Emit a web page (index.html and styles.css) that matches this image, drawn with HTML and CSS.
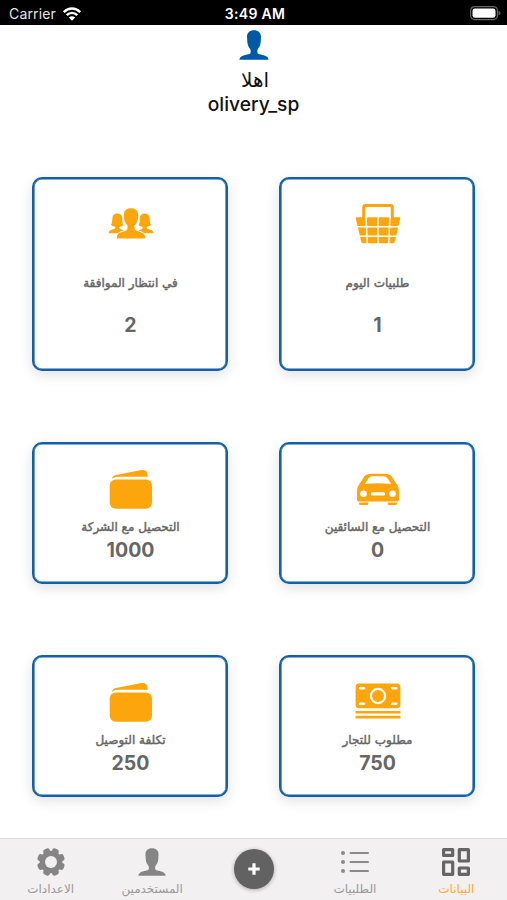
FILE: index.html
```html
<!DOCTYPE html>
<html lang="ar">
<head>
<meta charset="utf-8">
<title>olivery</title>
<link rel="stylesheet" href="styles.css">
</head>
<body>
<svg class="defs" aria-hidden="true">
  <symbol id="person" viewBox="0 0 30 30">
    <path d="M15 .2C10.800.2 8 2.700 8 6.500L8.300 12C8.600 15 9.600 17.200 11 18.700C12.100 20.300 11.700 22.600 11.200 23.400C9.500 24.600 4 25 2 26.700C.9 27.600.5 28.500.4 29.800H29.600C29.500 28.500 29.100 27.600 28 26.700C26 25 20.500 24.600 18.800 23.400C18.300 22.600 17.900 20.300 19 18.700C20.400 17.200 21.400 15 21.700 12L22 6.500C22 2.700 19.200.2 15 .2Z"/>
  </symbol>
  <symbol id="wallet" viewBox="0 0 46 46">
    <path d="M4 12.800C4.200 11 5.800 9.400 8 9L33.500 4.100C37 3.500 39.500 5.500 39.500 8.500V11.300C39 11 38 10.800 36 10.800H11C7.500 10.800 5.800 11.500 4 12.800Z"/>
    <rect x="1.700" y="13.600" width="42.300" height="29.200" rx="6"/>
  </symbol>
</svg>
<div class="app">
  <header class="status">
    <span class="carrier">Carrier
      <svg width="20" height="16" viewBox="0 0 20 16" fill="none" stroke="#fff" stroke-width="2.500"><path d="M1.800 6.100C6.600 1.400 13.400 1.400 18.200 6.100M4.700 9.200C7.800 6.200 12.200 6.200 15.300 9.200"/><path d="M10 14.800L6.900 11.500C8.600 9.900 11.400 9.900 13.100 11.500Z" fill="#fff" stroke="none"/></svg>
    </span>
    <span class="time">3:49 AM</span>
    <span class="battery"><svg width="31" height="15" viewBox="0 0 31 15"><rect x=".6" y=".6" width="26.800" height="13" rx="4" fill="none" stroke="#666" stroke-width="1.200"/><rect x="2.500" y="2.400" width="23" height="9.400" rx="2.300" fill="#fff"/><path d="M28.600 4.800Q30.500 5.500 30.500 7.100T28.600 9.400Z" fill="#666"/></svg></span>
  </header>

  <main>
    <section class="profile">
      <svg class="avatar" width="30" height="30"><use href="#person"/></svg>
      <p class="hello" dir="rtl">اهلا</p>
      <p class="name">olivery_sp</p>
    </section>

    <section class="cards" dir="rtl">
      <article class="card tall">
        <svg width="46" height="46" viewBox="0 0 46 46">
          <path d="M1.500 16.300H44.500Q45.500 16.300 45.300 17.300L39.700 41Q39.400 42.300 38 42.300H8Q6.600 42.300 6.300 41L.7 17.300Q.5 16.300 1.500 16.300Z"/>
          <path d="M8.700 17V6.300Q8.700 4.500 10.500 4.500H35.500Q37.300 4.500 37.300 6.300V17" fill="#fff" stroke="#fda50d" stroke-width="3"/>
          <path d="M12.300 16.300H33.700V24H12.300Z"/>
          <path d="M0 25.700H46M0 35.300H46M23 16V43M11 15L12.300 43M35 15L33.700 43" stroke="#fff" stroke-width="1.500" fill="none"/>
        </svg>
        <h2>طلبيات اليوم</h2>
        <strong>1</strong>
      </article>
      <article class="card tall">
        <svg width="46" height="46" viewBox="0 0 46 46">
          <path id="member" d="M9.300 12.500C6.300 12.500 4.600 14.200 4.400 17C4.200 20 4 22.500 3 24C4 25.300 6 25.600 7.200 25.800V27.200C6 28.300 3 28.500 1.700 29.700C.9 30.500.7 31.200.7 32.300H10C12 30.500 14 30.300 15.800 29.400C14 28.700 12 28 11.400 27.200V25.800C13 25.600 14.500 25.200 15.300 24C14.400 22.500 14.300 20 14.200 17C14 14.200 12.300 12.500 9.300 12.500Z"/>
          <use href="#member" transform="translate(46 0) scale(-1 1)"/>
          <path d="M23 7.200C18.500 7.200 15.800 9.700 15.800 14C15.800 19.200 17 22 19.300 24.200C19.800 26 19.600 28 18.800 28.900C16.800 30.400 12.500 30.700 10.500 32.500C9.200 33.700 8.900 35.500 8.900 37.600H37.100C37.100 35.500 36.800 33.700 35.500 32.500C33.500 30.700 29.200 30.400 27.200 28.900C26.400 28 26.200 26 26.700 24.200C29 22 30.200 19.200 30.200 14C30.200 9.700 27.500 7.200 23 7.200Z" stroke="#fff" stroke-width="1.400" paint-order="stroke"/>
        </svg>
        <h2>في انتظار الموافقة</h2>
        <strong>2</strong>
      </article>

      <article class="card">
        <svg width="46" height="46" viewBox="0 -.7 46 46">
          <path d="M16 7H30C33 7 35.200 7.800 36.700 9.700L41.500 17.200C43.200 19.200 44 21.500 44 25V33Q44 34.800 42.300 34.800H3.700Q2 34.800 2 33V25C2 21.500 2.800 19.200 4.500 17.200L9.300 9.700C10.800 7.800 13 7 16 7ZM4 35.900H13.300V37Q13.300 38.200 12 38.200H5.500Q4 38.200 4 37ZM32.700 35.900H42V37Q42 38.200 40.500 38.200H34Q32.700 38.200 32.700 37Z"/>
          <path d="M9.800 17.300L13.500 11.500Q14.800 9.500 17.300 9.500H28.700Q31.200 9.500 32.500 11.500L36.200 17.300Q23 15.600 9.800 17.300Z" fill="#fff"/>
          <circle cx="8.500" cy="27" r="3.300" fill="#fff"/><circle cx="37.500" cy="27" r="3.300" fill="#fff"/>
          <rect x="15.800" y="25.500" width="14.400" height="3.300" rx="1.600" fill="#fff"/>
        </svg>
        <h2>التحصيل مع السائقين</h2>
        <strong>0</strong>
      </article>
      <article class="card">
        <svg width="46" height="46"><use href="#wallet"/></svg>
        <h2>التحصيل مع الشركة</h2>
        <strong>1000</strong>
      </article>

      <article class="card">
        <svg width="46" height="46" viewBox="0 0 46 46">
          <rect x=".6" y="4.500" width="44.800" height="24.700" rx="3.500"/>
          <path d="M.6 32H45.400V34.500H.6ZM.6 36.800H45.400V39.500H.6Z"/>
          <circle cx="23" cy="17" r="7.100" fill="none" stroke="#fff" stroke-width="2.200"/>
          <path d="M5 9.200H9M37.200 9.200H41.200M5 24.700H9M37.200 24.700H41.200" stroke="#fff" stroke-width="2.600" stroke-linecap="round"/>
        </svg>
        <h2>مطلوب للتجار</h2>
        <strong>750</strong>
      </article>
      <article class="card">
        <svg width="46" height="46"><use href="#wallet"/></svg>
        <h2>تكلفة التوصيل</h2>
        <strong>250</strong>
      </article>
    </section>
  </main>

  <nav class="tabs" dir="rtl">
    <a class="tab active">
      <svg width="30" height="30" viewBox="0 0 30 30" fill="none" stroke="#656565" stroke-width="3.200" stroke-linejoin="round"><path d="M2.600 2.600H11.700V8.400H2.600ZM18.300 2.600H27.400V14H18.300ZM2.600 15H11.700V27.300H2.600ZM18.300 21H27.400V27.300H18.300Z"/></svg>
      <span>البيانات</span>
    </a>
    <a class="tab">
      <svg width="30" height="30" viewBox="0 0 30 30" fill="none" stroke="#8a8a8a" stroke-linecap="round"><path d="M10.500 6H28M10.500 15H28M10.500 24H28" stroke-width="2"/><path d="M3 6H3.010M3 15H3.010M3 24H3.010" stroke-width="4"/></svg>
      <span>الطلبيات</span>
    </a>
    <a class="tab add"><svg width="40" height="40" viewBox="0 0 40 40"><path d="M20 14.300V25.700M14.300 20H25.700" stroke="#fff" stroke-width="3.200"/></svg></a>
    <a class="tab">
      <svg width="28" height="30"><use href="#person"/></svg>
      <span>المستخدمين</span>
    </a>
    <a class="tab">
      <svg width="30" height="30" viewBox="-15 -15 30 30">
        <g id="teeth"><rect x="-3.400" y="-14" width="6.800" height="28" rx="2.200" transform="rotate(22.500)"/><rect x="-3.400" y="-14" width="6.800" height="28" rx="2.200" transform="rotate(67.500)"/></g>
        <use href="#teeth" transform="rotate(90)"/>
        <circle r="11.300"/><circle r="6" fill="#f2f0f1"/>
      </svg>
      <span>الاعدادات</span>
    </a>
  </nav>
</div>
</body>
</html>
```

FILE: styles.css
```css
* { box-sizing: border-box; }
body { margin: 0; background: #fff; font-family: Inter, "DejaVu Sans", sans-serif; }
.defs { position: absolute; width: 0; height: 0; }
.app { height: 900px; display: flex; flex-direction: column; overflow: hidden; }
p, h2 { margin: 0; }
svg { display: block; flex: none; }

.status {
  height: 25px; flex: none; padding: 2px 6px 0 9px;
  display: grid; grid-template-columns: 1fr auto 1fr; align-items: center;
  background: #000; color: #fff; font-size: 14px;
}
.carrier { display: flex; align-items: center; gap: 6px; color: #e4e4e4; letter-spacing: .15px; }
.time { font-weight: 600; font-size: 14px; letter-spacing: .3px; }
.battery { justify-self: end; }

main { flex: 1; }
.profile { height: 152px; padding-top: 5px; display: flex; flex-direction: column; align-items: center; color: #111; }
.avatar { fill: #0059a5; }
.hello { margin-top: 8px; font-size: 20px; line-height: 24px; padding-left: 3px; }
.name { font-size: 19.200px; line-height: 24px; font-weight: 500; }

.cards {
  display: grid; grid-template-columns: 196px 196px; grid-template-rows: 194px 142px 142px;
  column-gap: 51px; row-gap: 71px; padding: 0 32px; justify-content: start;
}
.card {
  display: flex; flex-direction: column; align-items: center;
  padding: 22px 0 0 1px; border: 2px solid #1260a8; border-radius: 10px;
  background: #fff; color: #666; fill: #fda50d;
  box-shadow: inset 0 0 0 .6px #1260a8, 0 4px 13px rgba(0, 0, 0, .12);
}
.card h2 {
  margin-top: 5px; font: 12px/20px "DejaVu Sans", sans-serif; white-space: nowrap;
  -webkit-text-stroke: .45px #666;
}
.card strong { font-size: 19.500px; line-height: 26px; font-weight: 650; }
.tall h2 { margin-top: 26px; }
.tall strong { margin-top: 19px; }

.tabs {
  height: 62px; flex: none; display: grid; grid-template-columns: repeat(5, 1fr);
  background: #f2f0f1; border-top: 1px solid #dedede; fill: #858585;
}
.tab { display: flex; flex-direction: column; align-items: center; padding-top: 8px; color: #999; }
.tab span { margin-top: 3px; font: 12px/18px "DejaVu Sans", sans-serif; white-space: nowrap; }
.active span { color: #fbad35; }
.add { padding-top: 10px; }
.add svg { background: #626262; border-radius: 50%; box-shadow: 0 1px 4px rgba(0, 0, 0, .3); }
```
